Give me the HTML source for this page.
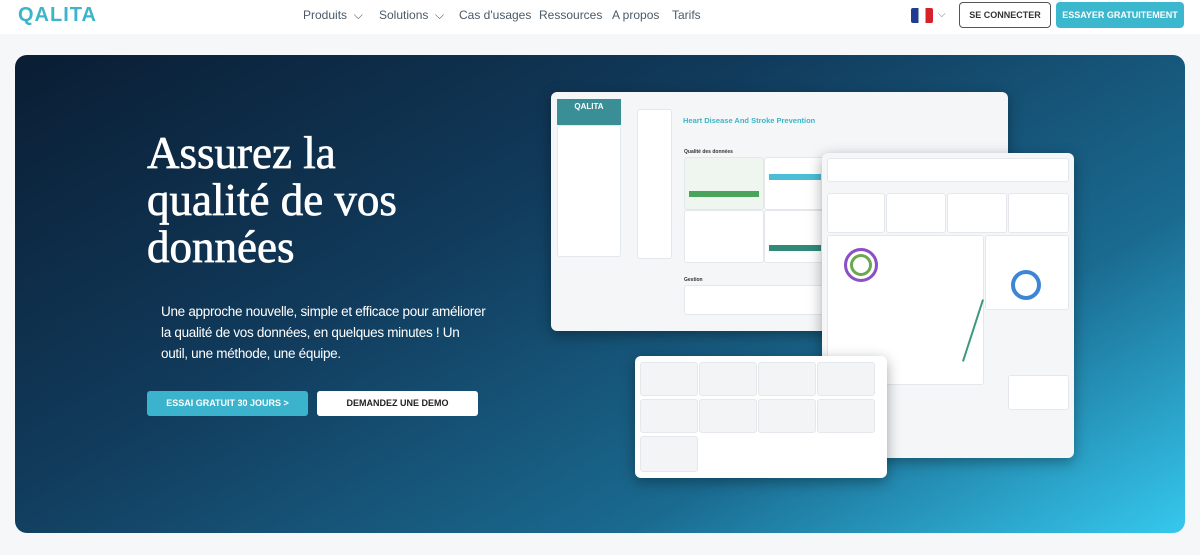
<!DOCTYPE html>
<html><head><meta charset="utf-8"><style>
*{margin:0;padding:0;box-sizing:border-box}
body{width:1200px;height:555px;background:#f6f7f9;font-family:"Liberation Sans",sans-serif;position:relative;overflow:hidden}
.nav{position:absolute;top:0;left:0;width:1200px;height:34px;background:#fff}
.logo{position:absolute;left:18px;top:4px;font:bold 20px "Liberation Sans",sans-serif;color:#3bb5c9;letter-spacing:1px}
.links{position:absolute;top:8px;left:303px;font-size:12px;color:#4a5a68}
.links span{position:absolute;white-space:nowrap}
.hero{position:absolute;left:15px;top:55px;width:1170px;height:478px;border-radius:12px;background:linear-gradient(150deg,#0a1d33 0%,#113b5c 38%,#1a6a90 72%,#36c8ee 100%)}
h1{position:absolute;left:147px;top:130px;font:45px/47px "Liberation Serif",serif;color:#fff;-webkit-text-stroke:0.7px #fff}
.p{position:absolute;left:161px;top:301px;width:328px;font-size:13.5px;letter-spacing:-0.3px;line-height:21px;color:#fff}
.b{position:absolute;top:391px;height:25px;border-radius:3px;font-size:9px;font-weight:bold;text-align:center;line-height:25px}
.w{position:absolute;background:#f4f6f8;border-radius:6px;box-shadow:0 4px 14px rgba(0,0,0,.35);overflow:hidden}
.c{position:absolute;background:#fff;border-radius:3px;border:1px solid #e4e8ec}
</style></head><body>
<div class="nav">
<div class="logo">QALITA</div>
<div class="links"><span style="left:0">Produits&nbsp; ⌵</span><span style="left:76px">Solutions&nbsp; ⌵</span><span style="left:156px">Cas d'usages</span><span style="left:236px">Ressources</span><span style="left:309px">A propos</span><span style="left:369px">Tarifs</span></div>
<div style="position:absolute;left:911px;top:8px;width:22px;height:15px;border-radius:2px;background:linear-gradient(90deg,#1f3d8f 33%,#fff 33% 66%,#d8202c 66%)"></div>
<div style="position:absolute;left:938px;top:9px;font-size:10px;color:#777">⌵</div>
<div style="position:absolute;left:959px;top:2px;width:92px;height:26px;border:1px solid #555;border-radius:4px;font-size:9px;font-weight:bold;text-align:center;line-height:24px;color:#333">SE CONNECTER</div>
<div style="position:absolute;left:1056px;top:2px;width:128px;height:26px;background:#3cb8ce;border-radius:4px;font-size:9px;font-weight:bold;text-align:center;line-height:26px;color:#fff">ESSAYER GRATUITEMENT</div>
</div>
<div class="hero"></div>
<h1>Assurez la<br>qualité de vos<br>données</h1>
<div class="p">Une approche nouvelle, simple et efficace pour améliorer la qualité de vos données, en quelques minutes ! Un outil, une méthode, une équipe.</div>
<div class="b" style="left:147px;width:161px;background:#3bb3cc;color:#fff">ESSAI GRATUIT 30 JOURS &gt;</div>
<div class="b" style="left:317px;width:161px;background:#fff;color:#222">DEMANDEZ UNE DEMO</div>

<div class="w" style="left:551px;top:92px;width:457px;height:239px">
 <div style="position:absolute;left:6px;top:7px;width:64px;height:26px;background:#3a8e96;color:#fff;font-size:8px;font-weight:bold;text-align:center;padding-top:3px">QALITA</div>
 <div class="c" style="left:6px;top:33px;width:64px;height:132px"></div>
 <div class="c" style="left:86px;top:17px;width:35px;height:150px"></div>
 <div style="position:absolute;left:132px;top:24px;font-size:7.5px;font-weight:bold;color:#3bb5c9">Heart Disease And Stroke Prevention</div>
 <div style="position:absolute;left:133px;top:57px;font-size:5px;font-weight:bold;color:#333">Qualité des données</div>
 <div class="c" style="left:133px;top:65px;width:80px;height:53px;background:#eef6ef"></div>
 <div style="position:absolute;left:138px;top:99px;width:70px;height:6px;background:#4aa35a"></div>
 <div class="c" style="left:213px;top:65px;width:60px;height:53px"></div>
 <div style="position:absolute;left:218px;top:82px;width:52px;height:6px;background:#4bbdd6"></div>
 <div class="c" style="left:133px;top:118px;width:80px;height:53px"></div>
 <div class="c" style="left:213px;top:118px;width:60px;height:53px"></div>
 <div style="position:absolute;left:218px;top:153px;width:52px;height:6px;background:#2f8a7a"></div>
 <div style="position:absolute;left:133px;top:185px;font-size:5px;font-weight:bold;color:#333">Gestion</div>
 <div class="c" style="left:133px;top:193px;width:140px;height:30px"></div>
</div>
<div class="w" style="left:822px;top:153px;width:252px;height:305px">
 <div class="c" style="left:5px;top:5px;width:242px;height:24px"></div>
 <div class="c" style="left:5px;top:40px;width:58px;height:40px"></div>
 <div class="c" style="left:64px;top:40px;width:60px;height:40px"></div>
 <div class="c" style="left:125px;top:40px;width:60px;height:40px"></div>
 <div class="c" style="left:186px;top:40px;width:61px;height:40px"></div>
 <div class="c" style="left:5px;top:82px;width:157px;height:150px"></div>
 <div style="position:absolute;left:22px;top:95px;width:34px;height:34px;border-radius:50%;border:3px solid #8b4fc8;box-shadow:inset 0 0 0 3px #fff,inset 0 0 0 6px #6aa84f"></div>
 <div class="c" style="left:163px;top:82px;width:84px;height:75px"></div>
 <div style="position:absolute;left:189px;top:117px;width:30px;height:30px;border-radius:50%;border:4px solid #3d86d6"></div>
 <div style="position:absolute;left:150px;top:145px;width:2px;height:65px;background:#3a9a7a;transform:rotate(18deg)"></div>
 <div class="c" style="left:186px;top:222px;width:61px;height:35px"></div>
</div>
<div class="w" style="left:635px;top:356px;width:252px;height:122px;background:#fff">
 <div class="c" style="left:5px;top:6px;width:58px;height:34px;background:#f3f4f5"></div>
 <div class="c" style="left:64px;top:6px;width:58px;height:34px;background:#f3f4f5"></div>
 <div class="c" style="left:123px;top:6px;width:58px;height:34px;background:#f3f4f5"></div>
 <div class="c" style="left:182px;top:6px;width:58px;height:34px;background:#f3f4f5"></div>
 <div class="c" style="left:5px;top:43px;width:58px;height:34px;background:#f3f4f5"></div>
 <div class="c" style="left:64px;top:43px;width:58px;height:34px;background:#f3f4f5"></div>
 <div class="c" style="left:123px;top:43px;width:58px;height:34px;background:#f3f4f5"></div>
 <div class="c" style="left:182px;top:43px;width:58px;height:34px;background:#f3f4f5"></div>
 <div class="c" style="left:5px;top:80px;width:58px;height:36px;background:#f3f4f5"></div>
</div>
</body></html>
